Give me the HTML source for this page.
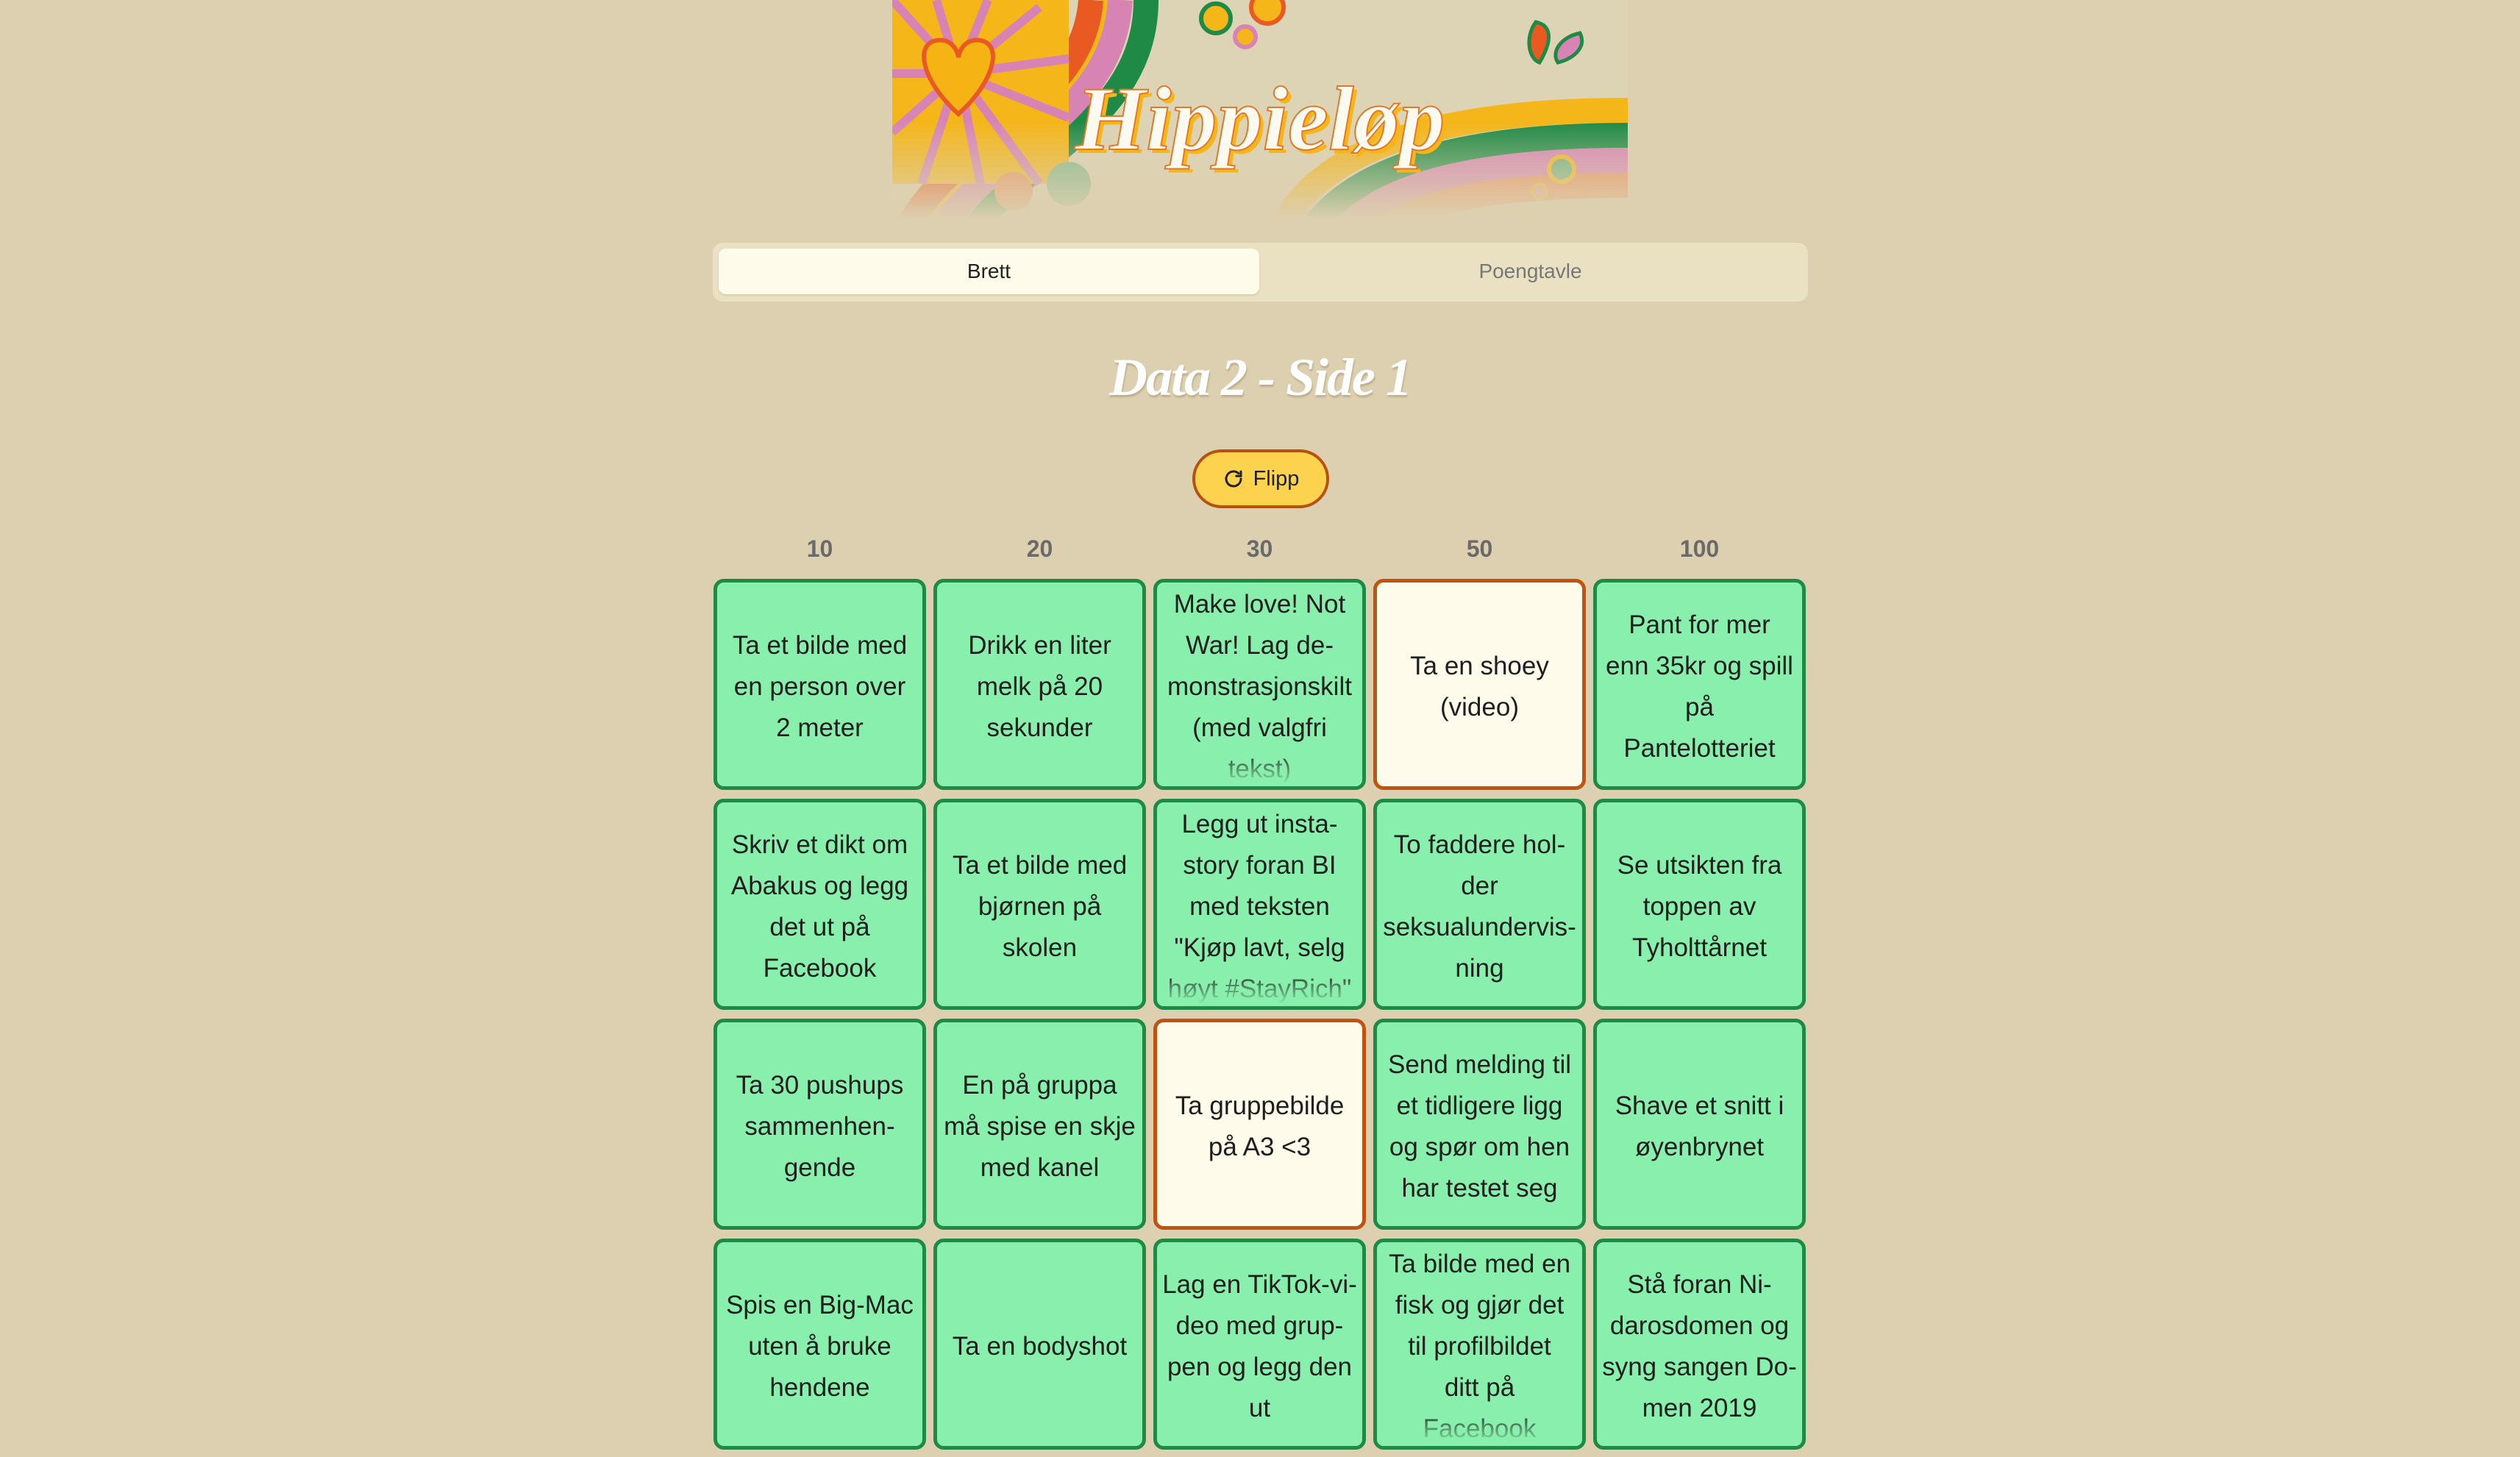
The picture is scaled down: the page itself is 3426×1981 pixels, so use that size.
<!DOCTYPE html>
<html><head><meta charset="utf-8"><style>
html,body{margin:0;padding:0}
body{width:3426px;height:1981px;overflow:hidden;background:#ddd0b0;font-family:"Liberation Sans",sans-serif;position:relative}
.banner{position:absolute;left:1213px;top:0;width:1000px;height:298px;overflow:hidden}
.tabs{position:absolute;left:969px;top:330px;width:1489px;height:80px;background:#e9e1c2;border-radius:14px}
.tab{position:absolute;top:8px;height:62px;width:735px;display:flex;align-items:center;justify-content:center;font-size:28px}
.t1{left:8px;background:#fefbea;border-radius:10px;color:#222;box-shadow:0 2px 3px rgba(0,0,0,.08)}
.t2{left:744px;color:#777}
h1{position:absolute;left:0;width:3426px;top:472px;margin:0;text-align:center;font-family:"Liberation Serif",serif;font-style:italic;font-weight:bold;font-size:72px;color:#fff;text-shadow:1px 3px 2px rgba(120,100,60,.3);letter-spacing:-2px}
.flip{position:absolute;left:1621px;top:611px;width:178px;height:72px;border:4px solid #b5520d;background:#fdd24f;border-radius:40px;display:flex;align-items:center;justify-content:center;font-size:29px;color:#222;gap:12px}
.hdr{position:absolute;top:728px;width:289px;text-align:center;font-size:32px;font-weight:bold;color:#6a6a6a}
.cell{position:absolute;width:279px;height:277px;border:5px solid #1f8a45;background:#88efac;border-radius:14px;overflow:hidden;display:flex;align-items:center;justify-content:center;text-align:center;font-size:35px;line-height:56px;color:#1e1e1e}
.cell>div{position:relative;top:3px}
.cell.c{background:#fefbea;border-color:#c0530f}
.cell.f::after{content:"";position:absolute;left:0;right:0;bottom:0;height:50px;background:linear-gradient(rgba(136,239,172,0),#88efac 95%)}
.cell span{display:block;white-space:nowrap}
</style></head><body>
<div class="banner">
<svg width="1000" height="298" viewBox="0 0 1000 298">
<defs><linearGradient id="fd" x1="0" y1="0" x2="0" y2="1"><stop offset="0.55" stop-color="#ddd0b0" stop-opacity="0"/><stop offset="1" stop-color="#ddd0b0" stop-opacity="1"/></linearGradient></defs>
<rect width="1000" height="298" fill="#ddd3b5"/>
<g fill="none" stroke-width="34">
<path d="M1000 150 C 700 150 560 220 520 330" stroke="#f4b619"/>
<path d="M1000 184 C 720 184 600 250 560 330" stroke="#1e8a45"/>
<path d="M1000 218 C 740 218 640 270 600 330" stroke="#d784b5"/>
<path d="M1000 252 C 760 252 680 290 650 330" stroke="#ec8e5a"/>
<path d="M300 0 C 300 150 100 200 40 330" stroke="#f4b619"/>
<path d="M270 0 C 260 150 70 190 10 330" stroke="#e85a22" />
<path d="M345 0 C 345 170 160 220 100 330" stroke="#1e8a45"/>
<path d="M310 0 C 300 170 110 210 60 330" stroke="#d784b5"/>
</g>
<g>
<rect x="0" y="0" width="240" height="250" fill="#f4b619"/>
<g stroke="#d784b5" stroke-width="12">
<line x1="90" y1="100" x2="0" y2="0"/><line x1="90" y1="100" x2="60" y2="0"/><line x1="90" y1="100" x2="130" y2="0"/><line x1="90" y1="100" x2="200" y2="10"/><line x1="90" y1="100" x2="240" y2="80"/><line x1="90" y1="100" x2="240" y2="160"/><line x1="90" y1="100" x2="200" y2="250"/><line x1="90" y1="100" x2="120" y2="250"/><line x1="90" y1="100" x2="40" y2="250"/><line x1="90" y1="100" x2="0" y2="180"/><line x1="90" y1="100" x2="0" y2="100"/>
</g>
<path d="M90 155 C 40 110 30 60 60 55 C 78 52 88 65 90 78 C 92 65 102 52 120 55 C 150 60 140 110 90 155Z" fill="#f6b414" stroke="#e85a22" stroke-width="6"/>
</g>
<circle cx="440" cy="25" r="20" fill="#f4b619" stroke="#1e8a45" stroke-width="6"/>
<circle cx="510" cy="10" r="22" fill="#f4b619" stroke="#e85a22" stroke-width="6"/>
<circle cx="480" cy="50" r="14" fill="#f4b619" stroke="#d784b5" stroke-width="6"/>
<circle cx="910" cy="230" r="17" fill="#6fb07c" stroke="#f4b619" stroke-width="6"/>
<circle cx="880" cy="260" r="10" fill="#e49a9a" stroke="#f4b619" stroke-width="4"/>
<circle cx="240" cy="250" r="30" fill="#7fb98b"/><circle cx="165" cy="260" r="26" fill="#ec8e5a"/>
<path d="M875 30 C 860 50 865 80 880 85 C 895 60 900 35 875 30Z" fill="#e85a22" stroke="#1e8a45" stroke-width="5"/>
<path d="M935 45 C 910 50 895 70 905 85 C 925 80 945 65 935 45Z" fill="#d784b5" stroke="#1e8a45" stroke-width="5"/>
<rect width="1000" height="298" fill="url(#fd)"/>
<text x="505" y="208" text-anchor="middle" font-family="Liberation Serif,serif" font-style="italic" font-weight="bold" font-size="124" fill="#f4b619">Hippieløp</text>
<text x="500" y="203" text-anchor="middle" font-family="Liberation Serif,serif" font-style="italic" font-weight="bold" font-size="124" fill="#fdfaf0" stroke="#e07a2a" stroke-width="2">Hippieløp</text>
</svg>
</div>
<div class="tabs"><div class="tab t1">Brett</div><div class="tab t2">Poengtavle</div></div>
<h1>Data 2 - Side 1</h1>
<div class="flip"><svg width="30" height="30" viewBox="0 0 24 24" fill="none" stroke="#222" stroke-width="2.4" stroke-linecap="round"><path d="M20 12a8 8 0 1 1-2.5-5.8"/><path d="M20 4v5h-5"/></svg>Flipp</div>

<div class="hdr" style="left:970px">10</div>
<div class="hdr" style="left:1269px">20</div>
<div class="hdr" style="left:1568px">30</div>
<div class="hdr" style="left:1867px">50</div>
<div class="hdr" style="left:2166px">100</div>

<div class="cell" style="left:970px;top:787px"><div><span>Ta et bilde med</span><span>en person over</span><span>2 meter</span></div></div>
<div class="cell" style="left:1269px;top:787px"><div><span>Drikk en liter</span><span>melk på 20</span><span>sekunder</span></div></div>
<div class="cell f" style="left:1568px;top:787px"><div><span>Make love! Not</span><span>War! Lag de-</span><span>monstrasjonskilt</span><span>(med valgfri</span><span>tekst)</span></div></div>
<div class="cell c" style="left:1867px;top:787px"><div><span>Ta en shoey</span><span>(video)</span></div></div>
<div class="cell" style="left:2166px;top:787px"><div><span>Pant for mer</span><span>enn 35kr og spill</span><span>på</span><span>Pantelotteriet</span></div></div>

<div class="cell" style="left:970px;top:1086px"><div><span>Skriv et dikt om</span><span>Abakus og legg</span><span>det ut på</span><span>Facebook</span></div></div>
<div class="cell" style="left:1269px;top:1086px"><div><span>Ta et bilde med</span><span>bjørnen på</span><span>skolen</span></div></div>
<div class="cell f" style="left:1568px;top:1086px"><div><span>Legg ut insta-</span><span>story foran BI</span><span>med teksten</span><span>"Kjøp lavt, selg</span><span>høyt #StayRich"</span></div></div>
<div class="cell" style="left:1867px;top:1086px"><div><span>To faddere hol-</span><span>der</span><span>seksualundervis-</span><span>ning</span></div></div>
<div class="cell" style="left:2166px;top:1086px"><div><span>Se utsikten fra</span><span>toppen av</span><span>Tyholttårnet</span></div></div>

<div class="cell" style="left:970px;top:1385px"><div><span>Ta 30 pushups</span><span>sammenhen-</span><span>gende</span></div></div>
<div class="cell" style="left:1269px;top:1385px"><div><span>En på gruppa</span><span>må spise en skje</span><span>med kanel</span></div></div>
<div class="cell c" style="left:1568px;top:1385px"><div><span>Ta gruppebilde</span><span>på A3 &lt;3</span></div></div>
<div class="cell" style="left:1867px;top:1385px"><div><span>Send melding til</span><span>et tidligere ligg</span><span>og spør om hen</span><span>har testet seg</span></div></div>
<div class="cell" style="left:2166px;top:1385px"><div><span>Shave et snitt i</span><span>øyenbrynet</span></div></div>

<div class="cell" style="left:970px;top:1684px"><div><span>Spis en Big-Mac</span><span>uten å bruke</span><span>hendene</span></div></div>
<div class="cell" style="left:1269px;top:1684px"><div><span>Ta en bodyshot</span></div></div>
<div class="cell" style="left:1568px;top:1684px"><div><span>Lag en TikTok-vi-</span><span>deo med grup-</span><span>pen og legg den</span><span>ut</span></div></div>
<div class="cell f" style="left:1867px;top:1684px"><div><span>Ta bilde med en</span><span>fisk og gjør det</span><span>til profilbildet</span><span>ditt på</span><span>Facebook</span></div></div>
<div class="cell" style="left:2166px;top:1684px"><div><span>Stå foran Ni-</span><span>darosdomen og</span><span>syng sangen Do-</span><span>men 2019</span></div></div>
</body></html>
